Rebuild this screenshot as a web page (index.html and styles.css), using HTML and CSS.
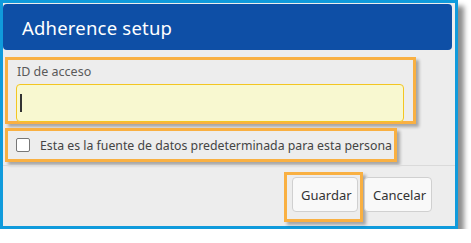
FILE: index.html
```html
<!DOCTYPE html>
<html>
<head>
<meta charset="utf-8">
<link rel="stylesheet" href="styles.css">
</head>
<body>
<div class="dialog">
  <div class="header"><h1 class="title">Adherence setup</h1></div>
  <div class="body">
    <div class="hl hl-field">
      <label class="label">ID de acceso</label>
      <div class="input"><span class="caret"></span></div>
    </div>
    <div class="hl hl-check">
      <span class="checkbox"></span>
      <span class="check-text">Esta es la fuente de datos predeterminada para esta persona</span>
    </div>
  </div>
  <div class="sep"></div>
  <div class="footer">
    <div class="hl hl-btn"><button class="btn">Guardar</button></div>
    <button class="btn">Cancelar</button>
  </div>
</div>
</body>
</html>
```
FILE: styles.css
```css
html, body { margin: 0; padding: 0; background: #fff; }
body { font-family: "Noto Sans", "Open Sans", sans-serif; }
.dialog {
  width: 452px;
  height: 223px;
  border: 3px solid #109bdc;
  background: #ededed;
  box-shadow: 6px 6px 5px rgba(0,0,0,0.45);
  display: flex;
  flex-direction: column;
}
.header {
  margin: 1px 3px 0 0;
  height: 46px;
  background: #0e4fa6;
  border-radius: 4px;
  display: flex;
  align-items: center;
  padding-left: 19px;
}
.title {
  margin: 0;
  color: #fff;
  font-weight: 400;
  font-size: 18.5px;
  letter-spacing: 0.2px;
}
.body { padding: 7px 0 0 2px; }
.hl {
  border: 3px solid #f9b042;
  box-shadow: 3px 3px 3px rgba(0,0,0,0.3);
  box-sizing: border-box;
}
.hl-field {
  width: 411px;
  height: 67px;
  padding: 3px 0 0 8px;
}
.label {
  display: block;
  color: #5a5a5a;
  font-size: 12.5px;
  line-height: 18px;
  margin-left: 1px;
}
.input {
  margin-top: 3px;
  width: 388px;
  height: 38px;
  box-sizing: border-box;
  background: #f8f8d0;
  border: 1px solid #f3c622;
  border-radius: 4px;
  display: flex;
  align-items: center;
  padding-left: 3px;
}
.caret { width: 2px; height: 18px; background: #333; }
.hl-check {
  margin-top: 4px;
  width: 392px;
  height: 34px;
  display: flex;
  align-items: center;
  padding-left: 8px;
}
.checkbox {
  width: 12px; height: 12px;
  border: 1px solid #777;
  border-radius: 2px;
  background: #fff;
  flex: none;
}
.check-text {
  margin-left: 10px;
  color: #444;
  font-size: 12.3px;
  white-space: nowrap;
}
.sep { margin-top: 3px; height: 1px; background: #dadada; }
.footer {
  display: flex;
  justify-content: flex-end;
  align-items: flex-start;
  padding: 6px 23px 0 0;
}
.hl-btn { padding: 2px 2px 7px 5px; }
.btn {
  font-family: inherit;
  font-size: 13px;
  color: #333;
  background: #f9f9f9;
  border: 1px solid #d0d0d0;
  border-radius: 4px;
  height: 35px;
  padding: 0 8px;
  margin: 0;
}
.footer > .btn { margin-top: 5px; margin-left: 1px; }
.hl-btn .btn { width: 66px; }
.footer > .btn { width: 68px; }
```
